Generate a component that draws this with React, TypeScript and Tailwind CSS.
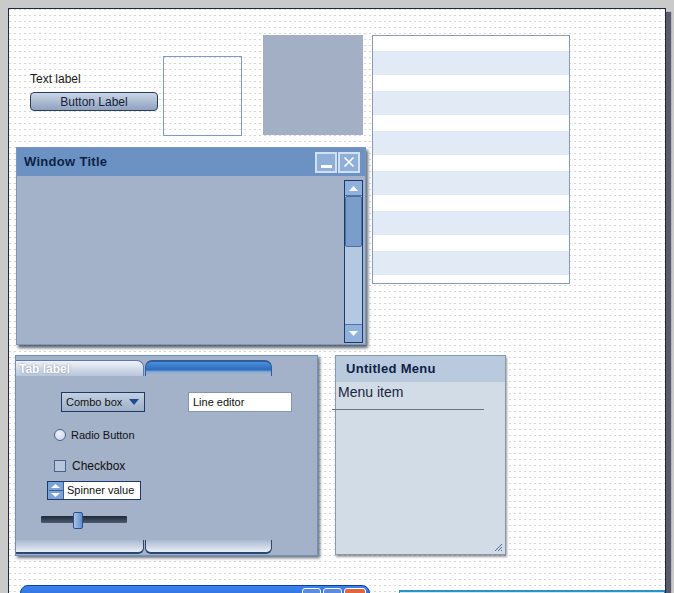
import React from "react";

const font = { fontFamily: '"Liberation Sans", Arial, sans-serif' };

function Stripes() {
  const rows = [0, 1, 2, 3, 4, 5];
  return (
    <div className="flex flex-col">
      <div className="h-[15px] bg-white" />
      {rows.map((r) => (
        <div key={r} className="flex flex-col">
          <div className="h-[24px] bg-[#e2eaf5]" />
          <div className="h-[16px] bg-white" />
        </div>
      ))}
    </div>
  );
}

function TitleButton({ kind }: { kind: "min" | "close" }) {
  return (
    <div className="w-[22px] h-[21px] border-2 border-[#d3e0f0] bg-[#8eafd8] flex items-center justify-center">
      {kind === "min" ? (
        <div className="w-[11px] h-[3px] bg-white mt-[9px]" />
      ) : (
        <svg width="12" height="12" viewBox="0 0 12 12">
          <path d="M1.5 1.5 L10.5 10.5 M10.5 1.5 L1.5 10.5" stroke="#fff" strokeWidth="1.6" />
        </svg>
      )}
    </div>
  );
}

function Arrow({ up, color = "#fff", w = 9, h = 5 }: { up: boolean; color?: string; w?: number; h?: number }) {
  return (
    <svg width={w} height={h} viewBox={`0 0 ${w} ${h}`}>
      <path d={up ? `M0 ${h} L${w / 2} 0 L${w} ${h} Z` : `M0 0 L${w / 2} ${h} L${w} 0 Z`} fill={color} />
    </svg>
  );
}

function Window() {
  return (
    <div className="absolute left-[7px] top-[138px] w-[350px] h-[198px] border border-[#7c96bd] bg-[#a3b2c9] shadow-[2px_3px_3px_rgba(40,50,70,0.75)] flex flex-col">
      <div className="h-[28px] bg-[#6b92c3] flex items-center justify-between pl-[7px] pr-[5px]">
        <span className="text-[13px] font-bold text-[#0e2247] tracking-[0.3px]">Window Title</span>
        <div className="flex gap-[1px]">
          <TitleButton kind="min" />
          <TitleButton kind="close" />
        </div>
      </div>
      <div className="flex-1 flex justify-end pt-[4px] pr-[2px] pb-[1px]">
        <div className="w-[19px] border border-[#1d3a69] bg-[#b3c8e1] flex flex-col">
          <div className="h-[15px] bg-[#8fb1dc] border-b border-[#4f74a8] flex items-center justify-center">
            <Arrow up />
          </div>
          <div className="h-[51px] bg-[#7b9dcc] border border-[#4e6f9f] rounded-[2px]" />
          <div className="flex-1" />
          <div className="h-[18px] bg-[#8fb1dc] border-t border-[#4f74a8] flex items-center justify-center">
            <Arrow up={false} />
          </div>
        </div>
      </div>
    </div>
  );
}

function TabWidget() {
  return (
    <div className="absolute left-[6px] top-[346px] w-[303px] h-[201px] border border-[#7390bd] bg-[#a3b2c9] shadow-[2px_2px_3px_rgba(40,50,70,0.7)]">
      <div className="flex mt-[4px] ml-[0px] gap-[1px]">
        <div className="w-[128px] h-[16px] rounded-tr-[7px] border-t border-r border-[#5b7aa8] bg-[linear-gradient(to_bottom,#eef3fa,#b8c6d9)] flex items-center pl-[3px]">
          <span className="text-[12px] font-bold text-white [text-shadow:0_0_2px_#7a8aa0] leading-none">Tab label</span>
        </div>
        <div className="w-[127px] h-[16px] rounded-t-[7px] border-t-2 border-l border-r border-[#2c5d9e] bg-[linear-gradient(to_bottom,#4f8fd8,#2a6cc0_55%,#8eaacc_70%,#a6b8d0)]" />
      </div>
      <div className="relative h-[164px]">
        <div className="absolute left-[45px] top-[16px] w-[84px] h-[20px] border border-[#1f3a66] bg-[linear-gradient(to_bottom,#c2d0e2,#9eb0c8)] flex items-center justify-between pl-[4px] pr-[5px]">
          <span className="text-[11px] text-[#111]">Combo box</span>
          <Arrow up={false} color="#1d4d8f" w={10} h={6} />
        </div>
        <div className="absolute left-[172px] top-[16px] w-[104px] h-[20px] border border-[#8796ae] bg-white flex items-center pl-[4px]">
          <span className="text-[11px] text-[#111]">Line editor</span>
        </div>
        <div className="absolute left-[38px] top-[51px] flex items-center gap-[5px]">
          <div className="w-[12px] h-[12px] rounded-full border border-[#4d628a] bg-[radial-gradient(circle_at_40%_35%,#eef3fa,#c5d3e6)]" />
          <span className="text-[11px] text-[#111]">Radio Button</span>
        </div>
        <div className="absolute left-[38px] top-[81px] flex items-center gap-[6px]">
          <div className="w-[12px] h-[12px] border border-[#4d628a] bg-[#b8c7dc]" />
          <span className="text-[12px] text-[#111]">Checkbox</span>
        </div>
        <div className="absolute left-[31px] top-[105px] w-[94px] h-[19px] border border-[#1f3a66] bg-white flex">
          <div className="w-[16px] bg-[#7da3d6] border-r border-[#3c5f92] flex flex-col items-center justify-center gap-[2px]">
            <Arrow up w={9} h={4} />
            <div className="w-[14px] h-[1px] bg-[#3c5f92]" />
            <Arrow up={false} w={9} h={4} />
          </div>
          <span className="text-[11px] text-[#111] pl-[3px] leading-[17px]">Spinner value</span>
        </div>
        <div className="absolute left-[25px] top-[140px] w-[86px] h-[7px] rounded-[1px] bg-[linear-gradient(to_bottom,#1e2838,#4d5b70)]" />
        <div className="absolute left-[57px] top-[136px] w-[10px] h-[17px] rounded-[2px] border border-[#2d5088] bg-[linear-gradient(to_right,#a6c4ea,#5f8fcc)]" />
      </div>
      <div className="flex gap-[1px]">
        <div className="w-[128px] h-[14px] rounded-br-[6px] border-b-2 border-r border-[#2d466e] bg-[linear-gradient(to_bottom,#a8b8cf,#e9eff7)]" />
        <div className="w-[127px] h-[14px] rounded-b-[6px] border-b-2 border-l border-r border-[#2d466e] bg-[linear-gradient(to_bottom,#a8b8cf,#e9eff7)]" />
      </div>
    </div>
  );
}

function Menu() {
  return (
    <div className="absolute left-[326px] top-[346px] w-[171px] h-[200px] border border-[#8c98a8] bg-[#d2dce7] shadow-[1px_2px_2px_rgba(60,60,70,0.5)] flex flex-col">
      <div className="h-[26px] bg-[#b9c9de] flex items-center pl-[10px]">
        <span className="text-[13px] font-bold text-[#0e2247] tracking-[0.3px]">Untitled Menu</span>
      </div>
      <div className="pl-[2px] pt-[1px] text-[14px] text-[#18263c] leading-[18px]">Menu item</div>
      <div className="-ml-[4px] mt-[8px] w-[152px] h-[1px] bg-[#6c7480]" />
      <div className="flex-1 flex items-end justify-end pr-[2px] pb-[2px]">
        <svg width="9" height="9" viewBox="0 0 9 9">
          <path d="M8 1 L1 8 M8 4 L4 8 M8 7 L7 8" stroke="#4a6a9a" strokeWidth="1" />
        </svg>
      </div>
    </div>
  );
}

export default function App() {
  return (
    <div className="relative w-[674px] h-[593px] overflow-hidden bg-[#cacaca]" style={font}>
      <div className="absolute left-[8px] top-[8px] w-[658px] h-[620px] border border-[#1c2742] bg-white bg-[linear-gradient(to_right,transparent_2px,#ffffff_2px),linear-gradient(to_bottom,#d6d6d6_1px,transparent_1px)] bg-size-[5px_6px] shadow-[5px_4px_1px_#5a5b6a]">
        <div className="absolute left-[21px] top-[61px] text-[12px] text-[#1a1a1a]">Text label</div>
        <div className="absolute left-[21px] top-[83px] w-[128px] h-[19px] rounded-[4px] border border-[#2b3d5c] bg-[linear-gradient(to_bottom,#cbd6e5,#8ea2bf)] flex items-center justify-center">
          <span className="text-[12px] text-[#14223a]">Button Label</span>
        </div>
        <div className="absolute left-[154px] top-[47px] w-[79px] h-[80px] border border-[#7d9cc3]" />
        <div className="absolute left-[254px] top-[26px] w-[100px] h-[100px] bg-[#a3afc4]" />
        <div className="absolute left-[363px] top-[26px] w-[198px] h-[249px] border border-[#8a9ab0] bg-white overflow-hidden">
          <Stripes />
        </div>
        <Window />
        <TabWidget />
        <Menu />
        <div className="absolute left-[11px] top-[576px] w-[350px] h-[30px] rounded-t-[8px] border border-[#0b3fa5] bg-[linear-gradient(to_bottom,#3d82ea,#1259d2)] flex justify-end items-start pt-[2px] pr-[3px] gap-[2px]">
          <div className="w-[19px] h-[19px] rounded-[3px] border border-white bg-[#5a8be0]" />
          <div className="w-[19px] h-[19px] rounded-[3px] border border-white bg-[#5a8be0]" />
          <div className="w-[22px] h-[19px] rounded-[3px] border border-white bg-[#e0663e]" />
        </div>
        <div className="absolute left-[390px] top-[581px] w-[266px] h-[20px] border-t-2 border-x border-[#2b93c8] bg-[#cfe6f4]" />
      </div>
    </div>
  );
}
